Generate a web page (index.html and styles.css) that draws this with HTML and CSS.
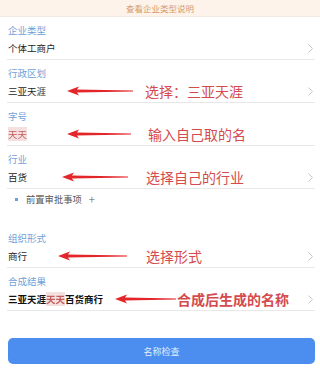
FILE: index.html
```html
<!DOCTYPE html>
<html lang="zh">
<head>
<meta charset="utf-8">
<link rel="stylesheet" href="styles.css">
</head>
<body>
<div class="page">
  <div class="notice">查看企业类型说明</div>
  <div class="form">
    <div class="row">
      <div class="label">企业类型</div>
      <div class="value"><span>个体工商户</span><svg class="chev" width="5" height="9" viewBox="0 0 5 9"><polyline points="0.5,0.5 4.5,4.5 0.5,8.5"/></svg></div>
    </div>
    <div class="row">
      <div class="label">行政区划</div>
      <div class="value"><span>三亚天涯</span><svg class="chev" width="5" height="9" viewBox="0 0 5 9"><polyline points="0.5,0.5 4.5,4.5 0.5,8.5"/></svg>
        <div class="note n1"><svg class="arrow" width="66" height="10" viewBox="0 0 66 10"><polygon points="0,5 12,0.5 10,3.6 66,4.4 66,5.6 10,6.4 12,9.5"/></svg><span class="note-text">选择：三亚天涯</span></div>
      </div>
    </div>
    <div class="row">
      <div class="label">字号</div>
      <div class="value"><span class="blur">天天</span>
        <div class="note n2"><svg class="arrow" width="64" height="10" viewBox="0 0 64 10"><polygon points="0,5 12,0.5 10,3.6 64,4.4 64,5.6 10,6.4 12,9.5"/></svg><span class="note-text">输入自己取的名</span></div>
      </div>
    </div>
    <div class="row">
      <div class="label">行业</div>
      <div class="value"><span>百货</span><svg class="chev" width="5" height="9" viewBox="0 0 5 9"><polyline points="0.5,0.5 4.5,4.5 0.5,8.5"/></svg>
        <div class="note n3"><svg class="arrow" width="66" height="10" viewBox="0 0 66 10"><polygon points="0,5 12,0.5 10,3.6 66,4.4 66,5.6 10,6.4 12,9.5"/></svg><span class="note-text">选择自己的行业</span></div>
      </div>
    </div>
    <div class="extra"><span class="dot"></span><span>前置审批事项</span><span class="plus">+</span></div>
    <div class="row">
      <div class="label">组织形式</div>
      <div class="value"><span>商行</span><svg class="chev" width="5" height="9" viewBox="0 0 5 9"><polyline points="0.5,0.5 4.5,4.5 0.5,8.5"/></svg>
        <div class="note n4"><svg class="arrow" width="69" height="10" viewBox="0 0 69 10"><polygon points="0,5 12,0.5 10,3.6 69,4.4 69,5.6 10,6.4 12,9.5"/></svg><span class="note-text">选择形式</span></div>
      </div>
    </div>
    <div class="row">
      <div class="label">合成结果</div>
      <div class="value strong"><span>三亚天涯<span class="blur">天天</span>百货商行</span><svg class="chev" width="5" height="9" viewBox="0 0 5 9"><polyline points="0.5,0.5 4.5,4.5 0.5,8.5"/></svg>
        <div class="note n5"><svg class="arrow" width="61" height="10" viewBox="0 0 61 10"><polygon points="0,5 12,0.5 10,3.6 61,4.4 61,5.6 10,6.4 12,9.5"/></svg><span class="note-text">合成后生成的名称</span></div>
      </div>
    </div>
  </div>
  <div class="actions"><button class="btn">名称检查</button></div>
</div>
</body>
</html>
```
FILE: styles.css
```css
* { box-sizing: border-box; }
html, body { margin: 0; padding: 0; background: #fff; }
body {
  font-family: "Noto Sans CJK SC", "Noto Sans", sans-serif;
  color: #222;
  width: 320px;
  height: 368px;
  overflow: hidden;
}
.page { display: flex; flex-direction: column; }
.notice {
  height: 17px;
  line-height: 17px;
  background: #fdf3ea;
  border-bottom: 1px solid #f6ebe2;
  color: #d49a6c;
  font-size: 8.5px;
  text-align: center;
}
.form { display: flex; flex-direction: column; margin: 0 5px 0 7px; }
.row {
  padding: 5px 0 1px 1px;
  border-bottom: 1px solid #e8e8e8;
  display: flex;
  flex-direction: column;
}
.label {
  font-size: 9.5px;
  line-height: 16px;
  color: #6f9fd8;
}
.value {
  position: relative;
  display: flex;
  align-items: center;
  justify-content: space-between;
  height: 20px;
  font-size: 9.5px;
  color: #1e1e1e;
}
.value.strong { font-weight: 700; color: #111; }
.chev {
  display: block;
  fill: none;
  stroke: #c6c6c6;
  stroke-width: 1;
  margin-right: 2px;
}
.blur {
  color: #c25e5e;
  background: rgba(214, 130, 130, 0.25);
  filter: blur(0.5px);
}
.note {
  position: absolute;
  top: 50%;
  transform: translateY(-50%);
  display: flex;
  align-items: center;
}
.arrow { display: block; fill: #e3262a; }
.note-text {
  font-size: 14px;
  line-height: 18px;
  color: #d44a4d;
  white-space: nowrap;
}
.n1 { left: 59px; gap: 12px; }
.n2 { left: 59px; gap: 17px; }
.n3 { left: 54px; gap: 18px; }
.n4 { left: 50px; gap: 19px; }
.n5 { left: 107px; gap: 1px; }
.extra {
  display: flex;
  gap: 5px;
  padding: 3px 0 0 8px;
  height: 36px;
  align-self: flex-start;
  align-items: flex-start;
  font-size: 9.3px;
  line-height: 14px;
  color: #555;
}
.dot {
  width: 3px;
  height: 3px;
  background: #6f9fd8;
  margin-top: 6px;
  margin-right: 3px;
}
.plus { color: #888; font-size: 11px; margin-left: 2px; }
.actions { margin: 27px 5px 0 8px; }
.btn {
  display: block;
  width: 100%;
  height: 26px;
  border: none;
  border-radius: 5px;
  background: #4b8ef0;
  color: #e3ecfb;
  font-family: "Noto Sans CJK SC", sans-serif;
  font-size: 9px;
}
```
